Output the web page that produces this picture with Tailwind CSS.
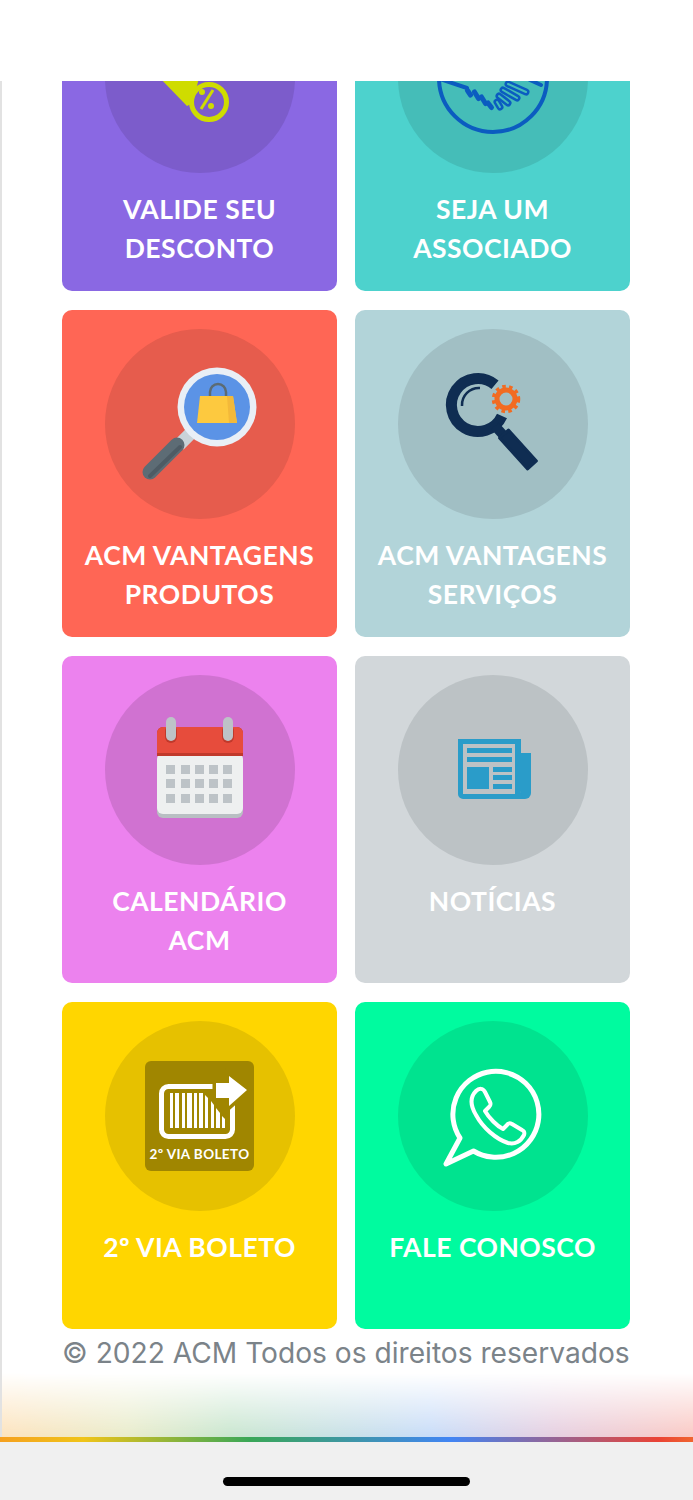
<!DOCTYPE html>
<html lang="pt-BR">
<head>
    <meta charset="UTF-8">
    <meta name="viewport" content="width=device-width, initial-scale=1.0">
    <title>ACM</title>
    <script src="https://cdn.jsdelivr.net/npm/@tailwindcss/browser@4"></script>
</head>
<body class="bg-white">
<div class="w-[693px] h-[1500px] flex flex-col overflow-hidden">
    <!-- status bar area -->
    <div class="h-[81px] shrink-0 bg-white"></div>

    <!-- scrolled content -->
    <div class="relative h-[1356px] shrink-0 overflow-hidden bg-white border-l-2 border-[#e2e2e2]">
        <div class="-mt-[117px] ml-[60px] w-[568px] grid grid-cols-2 gap-x-[18px] gap-y-[19px] text-white text-center font-['Lato',sans-serif] font-bold text-[26.5px] tracking-[0.5px] leading-[39px]">

            <!-- valide seu desconto -->
            <div class="h-[327px] rounded-[10px] bg-[#8a68e3] pt-[19px] flex flex-col items-center">
                <div class="w-[190px] h-[190px] rounded-full bg-[#7c5ccb] shrink-0">
                    <svg viewBox="0 0 190 190" class="w-full h-full">
                        <path d="M50 90 H95 L88 120 L82 123 Z" fill="#cfdc00"/>
                        <circle cx="104" cy="119" r="17.5" fill="#7c5ccb" stroke="#cfdc00" stroke-width="5"/>
                        <path d="M108 107 L96 126" stroke="#cfdc00" stroke-width="3"/>
                        <circle cx="97" cy="109" r="3" fill="#cfdc00"/>
                        <circle cx="106" cy="123" r="3" fill="#cfdc00"/>
                    </svg>
                </div>
                <p class="mt-[16.5px]">VALIDE SEU<br>DESCONTO</p>
            </div>

            <!-- seja um associado -->
            <div class="h-[327px] rounded-[10px] bg-[#4dd2cd] pt-[19px] flex flex-col items-center">
                <div class="w-[190px] h-[190px] rounded-full bg-[#45bdb8] shrink-0">
                    <svg viewBox="0 0 190 190" class="w-full h-full" fill="none" stroke="#0b5cc0" stroke-linecap="round" stroke-linejoin="round">
                        <circle cx="95" cy="95" r="54" stroke-width="4"/>
                        <path d="M42 96 L69 105" stroke-width="4"/>
                        <path d="M132 97 L143 102" stroke-width="4"/>
                        <g stroke-width="5">
                            <path d="M69.5 107.5 L72.5 112"/>
                            <path d="M76.5 109 L80.5 115.5"/>
                            <path d="M83.5 114 L87.5 120.5"/>
                            <path d="M90 120 L93.5 124.5"/>
                        </g>
                        <g stroke-width="7">
                            <path d="M99 119 L102 124"/>
                            <path d="M101 113 L110 120"/>
                            <path d="M105 107 L119 115"/>
                            <path d="M110 101 L128 109"/>
                        </g>
                        <g stroke="#45bdb8" stroke-width="2">
                            <path d="M99 119 L102 124"/>
                            <path d="M101 113 L110 120"/>
                            <path d="M105 107 L119 115"/>
                            <path d="M110 101 L128 109"/>
                        </g>
                    </svg>
                </div>
                <p class="mt-[16.5px]">SEJA UM<br>ASSOCIADO</p>
            </div>

            <!-- acm vantagens produtos -->
            <div class="h-[327px] rounded-[10px] bg-[#ff6655] pt-[19px] flex flex-col items-center">
                <div class="w-[190px] h-[190px] rounded-full bg-[#e65c4d] shrink-0">
                    <svg viewBox="0 0 190 190" class="w-full h-full">
                        <path d="M88 102 L74 116" stroke="#c9d3d8" stroke-width="13"/>
                        <path d="M45 143 L72 116" stroke="#5d6c75" stroke-width="15" stroke-linecap="round"/>
                        <path d="M45 147 L75 118" stroke="#4e5b64" stroke-width="4" stroke-linecap="round"/>
                        <circle cx="112" cy="78" r="39.5" fill="#e9eff6"/>
                        <circle cx="112" cy="78" r="33" fill="#5b93e6"/>
                        <path d="M105 68 V63 A8 8 0 0 1 121 63 V68" fill="none" stroke="#5c6b73" stroke-width="2.5"/>
                        <path d="M95 67 H128 L132 94 H92 Z" fill="#fdc93f"/>
                        <path d="M122 67 H128 L132 94 H124 Z" fill="#f3b93a"/>
                    </svg>
                </div>
                <p class="mt-[16.5px]">ACM VANTAGENS<br>PRODUTOS</p>
            </div>

            <!-- acm vantagens servicos -->
            <div class="h-[327px] rounded-[10px] bg-[#b2d4d9] pt-[19px] flex flex-col items-center">
                <div class="w-[190px] h-[190px] rounded-full bg-[#a1bfc4] shrink-0">
                    <svg viewBox="0 0 190 190" class="w-full h-full" fill="none">
                        <path d="M97 55.7 A26.5 26.5 0 1 0 104 87" stroke="#0f2d52" stroke-width="11"/>
                        <path d="M64 77 A17 17 0 0 1 82 59" stroke="#0f2d52" stroke-width="2.5"/>
                        <path d="M97 97 L107 108" stroke="#0f2d52" stroke-width="10"/>
                        <path d="M110.4 101 L138.4 132 L129.6 140 L101.6 109 Z" fill="#0f2d52" stroke="#0f2d52" stroke-width="3" stroke-linejoin="round"/>
                        <circle cx="108" cy="70" r="9" stroke="#f26b21" stroke-width="5"/>
                        <circle cx="108" cy="70" r="12.5" stroke="#f26b21" stroke-width="3.5" stroke-dasharray="3.5 3.35"/>
                    </svg>
                </div>
                <p class="mt-[16.5px]">ACM VANTAGENS<br>SERVIÇOS</p>
            </div>

            <!-- calendario -->
            <div class="h-[327px] rounded-[10px] bg-[#ec82ee] pt-[19px] flex flex-col items-center">
                <div class="w-[190px] h-[190px] rounded-full bg-[#d072d1] shrink-0">
                    <svg viewBox="0 0 190 190" class="w-full h-full">
                        <rect x="52" y="90" width="86" height="53" rx="6" fill="#b9bfc3"/>
                        <rect x="52" y="78" width="86" height="61" rx="6" fill="#eef0f0"/>
                        <path d="M52 81 V58 A6 6 0 0 1 58 52 H132 A6 6 0 0 1 138 58 V81 Z" fill="#c0392b"/>
                        <path d="M52 78 V58 A6 6 0 0 1 58 52 H132 A6 6 0 0 1 138 58 V78 Z" fill="#e74c3c"/>
                        <rect x="60" y="50" width="12" height="18" rx="6" fill="#c0392b"/>
                        <rect x="117" y="50" width="12" height="18" rx="6" fill="#c0392b"/>
                        <rect x="61" y="42" width="10" height="24" rx="5" fill="#bdc3c7"/>
                        <rect x="118" y="42" width="10" height="24" rx="5" fill="#bdc3c7"/>
                        <g fill="#bdc3c7">
                            <rect x="61" y="90" width="9" height="9"/><rect x="76" y="90" width="9" height="9"/><rect x="90" y="90" width="9" height="9"/><rect x="104" y="90" width="9" height="9"/><rect x="118" y="90" width="9" height="9"/>
                            <rect x="61" y="104" width="9" height="9"/><rect x="76" y="104" width="9" height="9"/><rect x="90" y="104" width="9" height="9"/><rect x="104" y="104" width="9" height="9"/><rect x="118" y="104" width="9" height="9"/>
                            <rect x="61" y="119" width="9" height="9"/><rect x="76" y="119" width="9" height="9"/><rect x="90" y="119" width="9" height="9"/><rect x="104" y="119" width="9" height="9"/><rect x="118" y="119" width="9" height="9"/>
                        </g>
                    </svg>
                </div>
                <p class="mt-[16.5px]">CALENDÁRIO<br>ACM</p>
            </div>

            <!-- noticias -->
            <div class="h-[327px] rounded-[10px] bg-[#d2d7da] pt-[19px] flex flex-col items-center">
                <div class="w-[190px] h-[190px] rounded-full bg-[#bcc2c5] shrink-0">
                    <svg viewBox="0 0 190 190" class="w-full h-full">
                        <path d="M123 78 H133 V118 A6 6 0 0 1 127 124 H123 Z" fill="#2a9cc9"/>
                        <path d="M60 64 H123 V116 A8 8 0 0 0 127 124 H65 A5 5 0 0 1 60 119 Z" fill="#2a9cc9"/>
                        <rect x="65" y="69" width="52" height="50" fill="#bcc2c5"/>
                        <g fill="#2a9cc9">
                            <rect x="69" y="73" width="45" height="5"/>
                            <rect x="69" y="82" width="45" height="5"/>
                            <rect x="69" y="92" width="22" height="22"/>
                            <rect x="95" y="92" width="19" height="5"/>
                            <rect x="95" y="100" width="19" height="5"/>
                            <rect x="95" y="109" width="19" height="5"/>
                        </g>
                    </svg>
                </div>
                <p class="mt-[16.5px]">NOTÍCIAS</p>
            </div>

            <!-- boleto -->
            <div class="h-[327px] rounded-[10px] bg-[#ffd600] pt-[19px] flex flex-col items-center">
                <div class="w-[190px] h-[190px] rounded-full bg-[#e6c100] shrink-0">
                    <svg viewBox="0 0 190 190" class="w-full h-full">
                        <rect x="40" y="40" width="109" height="110" rx="6" fill="#a08600"/>
                        <rect x="56.5" y="65.5" width="71" height="50" rx="7" fill="none" stroke="#fff" stroke-width="5"/>
                        <g fill="#fff">
                            <rect x="65" y="72" width="3" height="35"/>
                            <rect x="70" y="72" width="4" height="35"/>
                            <rect x="77" y="72" width="3" height="35"/>
                            <rect x="82" y="72" width="5" height="35"/>
                            <rect x="89" y="72" width="3" height="35"/>
                            <rect x="94" y="72" width="4" height="35"/>
                            <path d="M100 74 L103 77 V107 H100 Z"/>
                            <path d="M106 80 L109 84 V107 H106 Z"/>
                            <path d="M111 87 L115 92 V107 H111 Z"/>
                            <path d="M117 95 L120 98 V107 H117 Z"/>
                        </g>
                        <path d="M111 62 H124 V55 L142 69 L124 85 V77 H111 Z" fill="#fff" stroke="#a08600" stroke-width="7" paint-order="stroke"/>
                        <text x="94.5" y="138" text-anchor="middle" fill="#fff" font-family="Lato, sans-serif" font-weight="700" font-size="13.5" letter-spacing="0.4">2º VIA BOLETO</text>
                    </svg>
                </div>
                <p class="mt-[16.5px]">2º VIA BOLETO</p>
            </div>

            <!-- fale conosco -->
            <div class="h-[327px] rounded-[10px] bg-[#00fb9f] pt-[19px] flex flex-col items-center">
                <div class="w-[190px] h-[190px] rounded-full bg-[#00e38f] shrink-0">
                    <svg viewBox="0 0 190 190" class="w-full h-full" fill="none" stroke="#fff" stroke-linejoin="round">
                        <path d="M62 117 A43 43 0 1 1 75.5 130 L48 143 Z" stroke-width="5"/>
                        <path transform="translate(2 4)" d="M76 66 C70 72 70 80 76 90 C83 103 96 114 108 118 C115 120 121 116 124 110 C125 107 124 106 122 105 L112 99 C110 98 108 98 107 100 L103 104 C97 101 89 93 85 86 L89 82 C91 80 91 79 90 77 L85 67 C83 63 79 63 76 66 Z" stroke-width="4"/>
                    </svg>
                </div>
                <p class="mt-[16.5px]">FALE CONOSCO</p>
            </div>
        </div>

        <p class="mt-[6px] ml-[60px] w-[570px] font-['Inter',sans-serif] text-[28.15px] leading-[36px] text-[#7b8389] whitespace-nowrap">© 2022 ACM Todos os direitos reservados</p>

        <!-- glow above the rainbow line -->
        <div class="absolute left-0 right-0 bottom-0 h-[64px] bg-[linear-gradient(to_right,#fde3bd_0%,#e9eccb_18%,#c9e6cf_33%,#c8dcf8_62%,#e6cfe0_80%,#fac9c4_100%)] [mask-image:linear-gradient(to_top,black,transparent)]"></div>
    </div>

    <!-- rainbow line -->
    <div class="h-[5px] shrink-0 bg-[linear-gradient(to_right,#f5a01f_0%,#f0c419_12%,#3aa757_36%,#4285f4_65%,#ea4335_95%,#f0652f_100%)]"></div>

    <!-- home indicator bar -->
    <div class="flex-1 bg-[#f0f0f0] flex justify-center pt-[35px]">
        <div class="w-[247px] h-[9px] rounded-full bg-black"></div>
    </div>
</div>
</body>
</html>
